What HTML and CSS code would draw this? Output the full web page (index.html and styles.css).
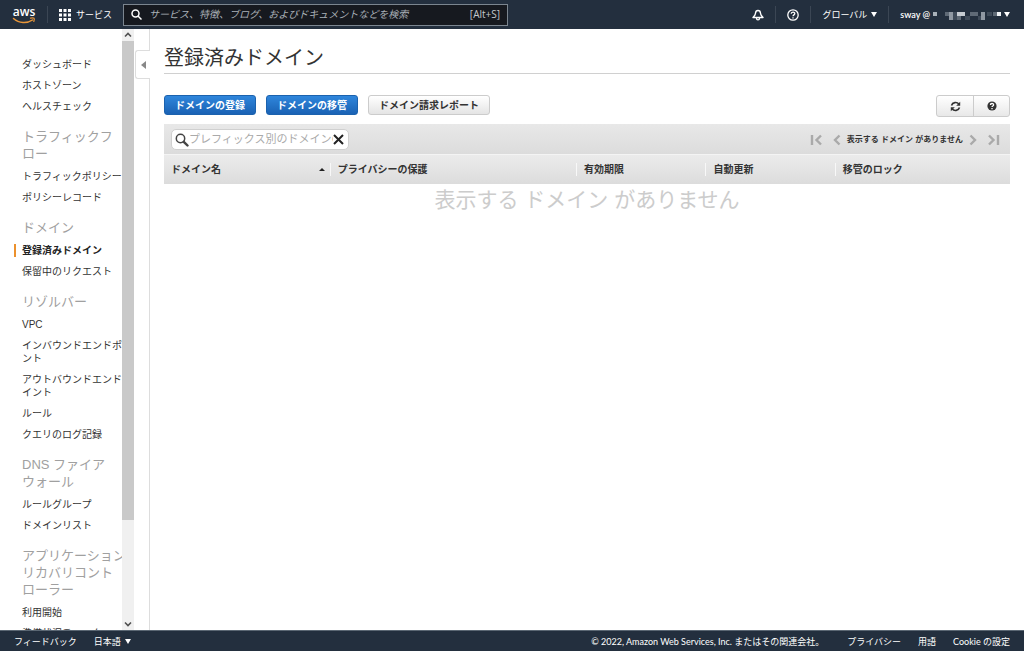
FILE: index.html
```html
<!DOCTYPE html>
<html lang="ja">
<head>
<meta charset="utf-8">
<title>登録済みドメイン</title>
<link rel="stylesheet" href="styles.css">
</head>
<body>
<header class="topbar">
  <a class="logo" href="#"><span class="logo-text">aws</span>
    <svg class="logo-smile" width="24" height="7" viewBox="0 0 24 7" fill="none" stroke="#e8963a" stroke-width="1.5" stroke-linecap="round"><path d="M1.500 1.500C7 6.500 15 6.800 20.500 3"/><path d="M18.500 1.200C22.500.5 23 1 21.800 4.500" stroke-width="1.200"/></svg>
  </a>
  <span class="divider"></span>
  <button class="services" type="button">
    <svg width="12" height="12" viewBox="0 0 12 12" fill="#fff"><path d="M0 0h3v3H0zM4.500 0h3v3h-3zM9 0h3v3H9zM0 4.500h3v3H0zM4.500 4.500h3v3h-3zM9 4.500h3v3H9zM0 9h3v3H0zM4.500 9h3v3h-3zM9 9h3v3H9z"/></svg>
    サービス
  </button>
  <label class="global-search">
    <svg width="11" height="11" viewBox="0 0 11 11" fill="none" stroke="#fff" stroke-width="1.500"><circle cx="4.500" cy="4.500" r="3.500"/><path d="M7 7l3.500 3.500"/></svg>
    <input type="search" aria-label="検索" placeholder="サービス、特徴、ブログ、およびドキュメントなどを検索">
    <span class="shortcut">[Alt+S]</span>
  </label>
  <nav class="account">
    <button type="button" aria-label="通知">
      <svg width="12" height="12" viewBox="0 0 12 12" fill="none" stroke="#fff" stroke-width="1.400" stroke-linejoin="round"><path d="M6 .8v1M6 1.500C4.300 1.500 3.600 2.800 3.500 4.300 3.400 6 2.500 6.800 1 8.500h10C9.500 6.800 8.600 6 8.500 4.300 8.400 2.800 7.700 1.500 6 1.500z"/><path d="M4.500 9c0 2.500 3 2.500 3 0"/></svg>
    </button>
    <span class="divider"></span>
    <button type="button" aria-label="ヘルプ">
      <svg width="12" height="12" viewBox="0 0 12 12" fill="none" stroke="#fff" stroke-width="1.300"><circle cx="6" cy="6" r="5.200"/><path d="M4.200 4.800C4.200 2.500 7.800 2.500 7.800 4.600 7.800 6 6 5.800 6 7.300M6 8.200v1.200"/></svg>
    </button>
    <span class="divider"></span>
    <button class="region" type="button">グローバル <i class="caret"></i></button>
    <span class="divider"></span>
    <button class="user" type="button">sway @
      <svg width="68" height="12" viewBox="0 0 68 12"><path fill="#a9b1b9" d="M0 3h4v4H0z"/><path fill="#5f6a76" d="M12 3h4v4h-4zM37 3h8v4h-8zM24 7h4v4h-4zM60 3h4v4h-4z"/><path fill="#8f98a2" d="M16 3h4v8h-4zM48 3h4v8h-4z"/><path fill="#c5cbd1" d="M24 3h8v4h-8z"/><path fill="#3e4a58" d="M20 3h4v8h-4zM32 7h5v4h-5zM45 7h3v4h-3zM54 3h5v4h-5z"/><path fill="#eef1f4" d="M64 3h4v4h-4z"/></svg>
      <i class="caret"></i></button>
  </nav>
</header>

<div class="workspace">
  <aside class="sidebar">
    <nav class="side-scroll">
      <div class="side-nav">
        <ul><li><a href="#">ダッシュボード</a></li><li><a href="#">ホストゾーン</a></li><li><a href="#">ヘルスチェック</a></li></ul>
        <h2>トラフィックフロー</h2>
        <ul><li><a href="#">トラフィックポリシー</a></li><li><a href="#">ポリシーレコード</a></li></ul>
        <h2>ドメイン</h2>
        <ul><li class="current"><a href="#" aria-current="page">登録済みドメイン</a></li><li><a href="#">保留中のリクエスト</a></li></ul>
        <h2>リゾルバー</h2>
        <ul><li><a href="#">VPC</a></li><li><a href="#">インバウンドエンドポイント</a></li><li><a href="#">アウトバウンドエンドポイント</a></li><li><a href="#">ルール</a></li><li><a href="#">クエリのログ記録</a></li></ul>
        <h2>DNS ファイアウォール</h2>
        <ul><li><a href="#">ルールグループ</a></li><li><a href="#">ドメインリスト</a></li></ul>
        <h2>アプリケーションリカバリコントローラー</h2>
        <ul><li><a href="#">利用開始</a></li><li><a href="#">準備状況チェック</a></li></ul>
      </div>
    </nav>
    <div class="scrollbar" aria-hidden="true">
      <svg width="12" height="12" viewBox="0 0 12 12" fill="none" stroke="#505050" stroke-width="1.600"><path d="M3 7.500L6 4.500l3 3"/></svg>
      <span class="track"><span class="thumb"></span></span>
      <svg width="12" height="12" viewBox="0 0 12 12" fill="none" stroke="#505050" stroke-width="1.600"><path d="M3 4.500l3 3 3-3"/></svg>
    </div>
    <div class="gutter">
      <button class="collapse" type="button" aria-label="ナビゲーションを閉じる"><i class="caret-left"></i></button>
      <span class="edge"></span>
    </div>
  </aside>

  <main class="content">
    <h1>登録済みドメイン</h1>
    <div class="actions">
      <button class="btn primary" type="button">ドメインの登録</button>
      <button class="btn primary" type="button">ドメインの移管</button>
      <button class="btn" type="button">ドメイン請求レポート</button>
      <div class="btn-group">
        <button type="button" aria-label="更新">
          <svg width="11" height="11" viewBox="0 0 11 11" fill="none" stroke="#333" stroke-width="1.600"><path d="M1.500 4.500C2.500 1 7 .8 8.800 3M9.500 6.500C8.500 10 4 10.200 2.200 8"/><path d="M10.200.8v4H6.200zM.8 10.200v-4h4z" fill="#333" stroke="none"/></svg>
        </button>
        <button type="button" aria-label="ヘルプ">
          <svg width="10" height="10" viewBox="0 0 10 10" fill="none"><circle cx="5" cy="5" r="4.600" fill="#333"/><path d="M3.400 4C3.400 2 6.600 2 6.600 3.900 6.600 5 5 4.900 5 6.100M5 6.900v1.300" stroke="#fff" stroke-width="1.300"/></svg>
        </button>
      </div>
    </div>

    <section class="grid-panel">
      <div class="toolbar">
        <label class="filter">
          <svg width="14" height="14" viewBox="0 0 14 14" fill="none" stroke="#444"><circle cx="5.500" cy="5.500" r="4.200" stroke-width="1.500"/><path d="M8.800 8.800l3.700 3.700" stroke-width="2.400" stroke-linecap="round"/></svg>
          <input type="text" aria-label="ドメインの検索" placeholder="プレフィックス別のドメインの検索">
          <button type="button" aria-label="クリア"><svg width="11" height="11" viewBox="0 0 11 11" stroke="#222" stroke-width="2"><path d="M1 1l9 9M10 1l-9 9"/></svg></button>
        </label>
        <div class="pager">
          <button type="button" aria-label="最初"><svg width="12" height="12" viewBox="0 0 12 12" fill="none" stroke="#aaa" stroke-width="2.400"><path d="M2 1v10M11 1.500L6.500 6l4.500 4.500"/></svg></button>
          <button type="button" aria-label="前へ"><svg width="8" height="12" viewBox="0 0 8 12" fill="none" stroke="#aaa" stroke-width="2.400"><path d="M6.500 1.500L2 6l4.500 4.500"/></svg></button>
          <span>表示する ドメイン がありません</span>
          <button type="button" aria-label="次へ"><svg width="8" height="12" viewBox="0 0 8 12" fill="none" stroke="#aaa" stroke-width="2.400"><path d="M1.500 1.500L6 6l-4.500 4.500"/></svg></button>
          <button type="button" aria-label="最後"><svg width="12" height="12" viewBox="0 0 12 12" fill="none" stroke="#aaa" stroke-width="2.400"><path d="M1 1.500L5.500 6 1 10.500M10 1v10"/></svg></button>
        </div>
      </div>
      <table>
        <colgroup><col class="c-name"><col class="c-privacy"><col class="c-date"><col class="c-renew"><col></colgroup>
        <thead>
          <tr>
            <th scope="col"><div class="sorted">ドメイン名 <i class="sort-up"></i></div></th>
            <th scope="col"><div>プライバシーの保護</div></th>
            <th scope="col"><div>有効期限</div></th>
            <th scope="col"><div>自動更新</div></th>
            <th scope="col"><div>移管のロック</div></th>
          </tr>
        </thead>
        <tbody><tr><td colspan="5">表示する ドメイン がありません</td></tr></tbody>
      </table>
    </section>
  </main>
</div>

<footer class="footer">
  <a href="#">フィードバック</a>
  <button type="button">日本語 <i class="caret"></i></button>
  <span class="copyright">© 2022, Amazon Web Services, Inc. またはその関連会社。</span>
  <a href="#">プライバシー</a>
  <a href="#">用語</a>
  <a href="#">Cookie の設定</a>
</footer>
</body>
</html>
```
FILE: styles.css
```css
* { box-sizing: border-box; }

body {
  margin: 0;
  height: 100vh;
  display: flex;
  flex-direction: column;
  overflow: hidden;
  background: #fff;
  color: #333;
  font: 10px/13px "Liberation Sans", "Noto Sans CJK JP", sans-serif;
}

a { color: inherit; text-decoration: none; }
ul { list-style: none; margin: 0; padding: 0; }
svg { display: block; flex: none; }
button {
  display: flex;
  align-items: center;
  justify-content: center;
  margin: 0;
  padding: 0;
  border: 0;
  background: none;
  color: inherit;
  font: inherit;
  white-space: nowrap;
}
input {
  min-width: 0;
  flex: 1;
  padding: 0;
  border: 0;
  outline: 0;
  background: none;
  color: inherit;
  font: inherit;
}

/* Top bar */
.topbar {
  flex: none;
  display: flex;
  align-items: center;
  height: 29px;
  padding: 0 13px 0 12px;
  background: #232f3e;
  color: #fff;
  font: 9px/13px "Open Sans", "Noto Sans CJK JP", sans-serif;
}
.logo { width: 24px; display: flex; flex-direction: column; align-items: center; }
.logo-text { font-size: 12px; line-height: 11px; font-weight: 600; }
.divider { width: 1px; height: 17px; background: #3b4654; }
.logo + .divider { margin-left: 11px; }
.services { gap: 5px; margin: 0 11px; }
.global-search {
  flex: 0 1 385px;
  display: flex;
  align-items: center;
  gap: 7px;
  height: 22px;
  padding: 0 7px;
  border: 1px solid #7b858f;
  background: #16191f;
  color: #c3c8cd;
  font-size: 10px;
}
.global-search input::placeholder { color: #a9b0b7; font-style: italic; opacity: 1; }
.account { display: flex; align-items: center; gap: 11px; margin-left: auto; }
.region { gap: 4px; }
.user { font: 600 9px/13px Lato, sans-serif; gap: 3px; }
.caret {
  border: 3px solid transparent;
  border-top: 5px solid currentColor;
  border-bottom: 0;
}

/* Side navigation */
.workspace { flex: 1; min-height: 0; display: flex; overflow: hidden; }
.sidebar { flex: none; display: flex; }
.side-scroll { width: 122px; overflow: hidden; padding: 29px 0 0 22px; }
.side-nav { width: 112px; line-break: strict; }
.side-nav ul { display: grid; gap: 8px; }
.side-nav h2 {
  margin: 15px 0 8px;
  color: #a0a0a0;
  font-size: 13px;
  line-height: 17px;
  font-weight: 400;
}
.current {
  margin-left: -8px;
  padding-left: 6px;
  border-left: 2px solid #ec912d;
  font-weight: 700;
  color: #222;
}
.scrollbar { width: 12px; display: flex; flex-direction: column; background: #f0f0f0; }
.track { flex: 1; }
.thumb { display: block; height: 83%; background: #c9c9c9; }
.gutter { width: 16px; display: flex; flex-direction: column; }
.gutter::before { content: ""; height: 21px; border-right: 1px solid #ddd; }
.edge { flex: 1; border-right: 1px solid #ddd; }
.collapse {
  width: 15px;
  height: 29px;
  margin-left: 1px;
  border: 1px solid #ddd;
  border-right: 0;
  border-radius: 3px 0 0 3px;
  background: #fff;
}
.caret-left {
  border: 4px solid transparent;
  border-right: 5px solid #888;
  border-left: 0;
}

/* Main content */
.content { flex: 1; min-width: 0; padding: 15px 14px 0; }
h1 {
  margin: 0 0 21px;
  padding-bottom: 1px;
  border-bottom: 1px solid #d0d0d0;
  font-size: 20px;
  line-height: 28px;
  font-weight: 400;
}
.actions { display: flex; gap: 10px; margin-bottom: 7px; }
.btn {
  height: 20px;
  padding: 0 10px;
  border: 1px solid #ccc;
  border-radius: 3px;
  background: linear-gradient(#fff, #e4e4e4);
  color: #333;
  font-weight: 700;
}
.primary {
  border-color: #1b62ae;
  background: linear-gradient(#2f86dc, #1a62b4);
  color: #fff;
}
.btn-group {
  display: flex;
  margin-left: auto;
  height: 22px;
  border: 1px solid #ccc;
  border-radius: 3px;
  background: linear-gradient(#fff, #e8e8e8);
}
.btn-group button { width: 36px; }
.btn-group button + button { border-left: 1px solid #ccc; }

.toolbar {
  display: flex;
  align-items: center;
  justify-content: space-between;
  height: 30px;
  padding: 1px 10px 0 7px;
  background: linear-gradient(#e8e8e8, #dcdcdc);
}
.filter {
  display: flex;
  align-items: center;
  width: 178px;
  height: 21px;
  padding: 0 4px 0 3px;
  border: 1px solid #d0d0d0;
  border-radius: 5px;
  background: #fff;
  font-size: 11px;
}
.filter input::placeholder { color: #aaa; opacity: 1; }
.pager { display: flex; align-items: center; gap: 11px; font-size: 8px; font-weight: 700; }
.pager span { margin: 0 -5px; }

table { width: 100%; border-collapse: collapse; table-layout: fixed; }
.c-name { width: 19.6%; }
.c-privacy { width: 29.1%; }
.c-date { width: 15.3%; }
.c-renew { width: 15.3%; }
thead { background: linear-gradient(#ececec, #dcdcdc); box-shadow: inset 0 1px #f4f4f4; }
th { height: 30px; padding: 0; text-align: left; font-weight: 700; }
th div { padding: 0 5px 0 7px; border-left: 1px solid #f8f8f8; }
th:first-child div { border: 0; }
.sorted { display: flex; align-items: center; justify-content: space-between; }
.sort-up { border: 3px solid transparent; border-bottom-color: #222; border-top: 0; }
td { padding: 1px 0; color: #ccc; font-size: 21px; line-height: 30px; text-align: center; }

/* Footer */
.footer {
  flex: none;
  display: flex;
  align-items: center;
  height: 21px;
  padding: 0 14px;
  border-top: 1px solid #5b6773;
  background: #232f3e;
  color: #fff;
  font: 9px/13px Lato, "Noto Sans CJK JP", sans-serif;
  gap: 17px;
}
.footer button { gap: 4px; }
.copyright { margin: 0 6px 0 auto; }
.account { padding-right: 1px; }
```
